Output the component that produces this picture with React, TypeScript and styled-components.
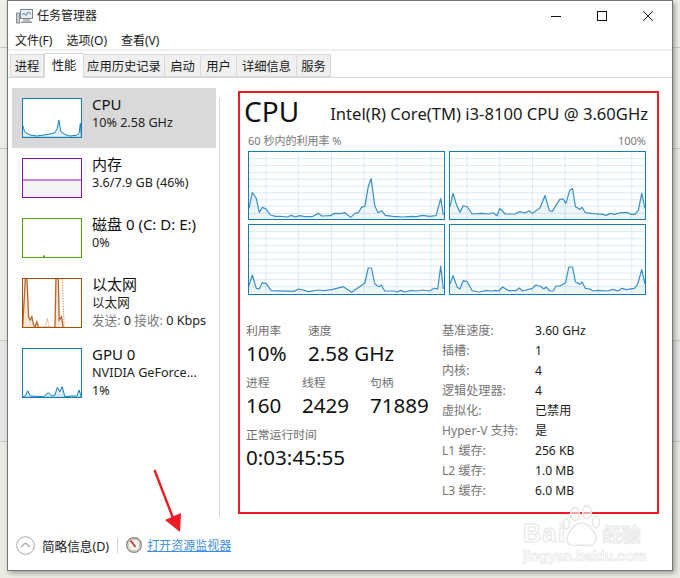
import React from "react";
import styled, { createGlobalStyle } from "styled-components";

const Global = createGlobalStyle`
  html, body { margin: 0; padding: 0; width: 680px; height: 578px; overflow: hidden; background: #e7e7e5; }
  body { font-family: "Noto Sans", "Noto Sans CJK SC", sans-serif; font-size: 12px; color: #1a1a1a; }
  * { box-sizing: border-box; }
`;

const Page = styled.div`
  position: relative;
  width: 680px;
  height: 578px;
  padding-left: 7px;
  overflow: hidden;
  background: linear-gradient(
    to bottom,
    #f0efe8 0 47px,
    #c9c9c6 47px 48px,
    #eeeee8 48px 148px,
    #c9c9c6 148px 149px,
    #ecece7 149px 340px,
    #c9c9c6 340px 341px,
    #e6e6e4 341px 441px,
    #c9c9c6 441px 442px,
    #ecebe3 442px 578px
  );
`;
const Window = styled.div`
  width: 666px;
  height: 571px;
  background: #fff;
  border: 1px solid #777;
  box-shadow: 2px 2px 5px rgba(0, 0, 0, 0.35);
  display: flex;
  flex-direction: column;
`;
const TitleBar = styled.div`
  height: 29px;
  display: flex;
  align-items: center;
  padding-left: 8px;
  gap: 4px;
  flex: none;
`;
const TitleText = styled.span`
  font-size: 12px;
  color: #222;
  flex: 1;
  padding-bottom: 1px;
`;
const WinButton = styled.div`
  width: 46px;
  height: 29px;
  display: flex;
  align-items: center;
  justify-content: center;
`;
const Controls = styled.div`
  display: flex;
  padding-right: 1px;
`;
const MenuBar = styled.div`
  height: 21px;
  display: flex;
  align-items: center;
  gap: 14px;
  padding-left: 7px;
  border-bottom: 2px solid #f0f0f0;
  flex: none;
`;
const MenuItem = styled.span`
  font-size: 12px;
  color: #1a1a1a;
`;
const Tabs = styled.div`
  height: 27px;
  display: flex;
  align-items: flex-end;
  padding-left: 2px;
  border-bottom: 1px solid #d9d9d9;
  flex: none;
`;
const Tab = styled.div<{ $active?: boolean; $first?: boolean; $w: number }>`
  width: ${(p) => p.$w}px;
  height: ${(p) => (p.$active ? 25 : 23)}px;
  margin-bottom: ${(p) => (p.$active ? -1 : 0)}px;
  background: ${(p) => (p.$active ? "#fff" : "#f0f0f0")};
  border: 1px solid #d9d9d9;
  border-bottom: ${(p) => (p.$active ? "none" : "1px solid #d9d9d9")};
  border-left: ${(p) => (p.$first || p.$active ? "1px solid #d9d9d9" : "none")};
  display: flex;
  align-items: center;
  justify-content: center;
  font-size: 12.3px;
  color: #1a1a1a;
  padding-bottom: ${(p) => (p.$active ? 2 : 0)}px;
  position: relative;
`;
const Body = styled.div`
  flex: 1;
  display: flex;
  min-height: 0;
  padding-top: 10px;
`;
const Sidebar = styled.div`
  width: 211px;
  padding-left: 4px;
  flex: none;
`;
const SideItem = styled.div<{ $h: number; $selected?: boolean }>`
  width: 204px;
  height: ${(p) => p.$h}px;
  background: ${(p) => (p.$selected ? "#d9d9d9" : "transparent")};
  display: flex;
  gap: 10px;
  padding: 10px 0 0 10px;
`;
const Thumb = styled.div<{ $color: string; $h?: number }>`
  width: 60px;
  height: ${(p) => p.$h ?? 40}px;
  border: 1px solid ${(p) => p.$color};
  background: #fff;
  flex: none;
  overflow: hidden;
  svg { display: block; width: 100%; height: 100%; }
`;
const SideText = styled.div`
  display: flex;
  flex-direction: column;
  min-width: 0;
  margin-top: -3px;
`;
const SideName = styled.div`
  font-size: 15px;
  line-height: 19px;
  color: #111;
  white-space: nowrap;
`;
const SideSub = styled.div`
  font-size: 12.6px;
  line-height: 18px;
  color: #222;
  white-space: nowrap;
`;
const Muted = styled.span`
  color: #7a7a7a;
`;
const Divider = styled.div`
  width: 1px;
  height: 419px;
  margin-top: 10px;
  background: #d6d6d6;
  flex: none;
`;
const Panel = styled.div`
  width: 421px;
  height: 423px;
  margin: 3px 0 0 18px;
  border: 2px solid #ed1c24;
  padding: 0 11px 0 4px;
  flex: none;
`;
const Head = styled.div`
  height: 36px;
  display: flex;
  justify-content: space-between;
  align-items: flex-end;
`;
const BigTitle = styled.div`
  font-size: 28px;
  line-height: 36px;
  color: #111;
`;
const Model = styled.div`
  font-size: 16.6px;
  line-height: 30px;
  color: #1a1a1a;
  white-space: nowrap;
  margin-right: -2px;
`;
const Caption = styled.div`
  display: flex;
  justify-content: space-between;
  margin: 3px 0 2px 4px;
  height: 17px;
  line-height: 17px;
  font-size: 11px;
  color: #777;
`;
const ChartGrid = styled.div`
  display: grid;
  grid-template-columns: 197px 197px;
  grid-template-rows: 69px 71px;
  gap: 4px;
  margin-left: 4px;
`;
const Chart = styled.div`
  border: 1px solid #117dbb;
  overflow: hidden;
  svg { display: block; width: 100%; height: 100%; }
`;
const Stats = styled.div`
  display: flex;
  margin-top: 26px;
  margin-left: 2px;
`;
const LeftStats = styled.div`
  width: 196px;
  flex: none;
`;
const StatRow = styled.div`
  display: flex;
  height: 52px;
`;
const Stat = styled.div<{ $w: number }>`
  width: ${(p) => p.$w}px;
  flex: none;
`;
const StatLabel = styled.div`
  font-size: 11.8px;
  line-height: 18px;
  color: #6f6f6f;
  white-space: nowrap;
`;
const StatValue = styled.div`
  font-size: 20.6px;
  line-height: 28px;
  color: #111;
  white-space: nowrap;
`;
const Specs = styled.div`
  display: grid;
  grid-template-columns: 93px 1fr;
  grid-auto-rows: 20px;
  align-items: center;
  font-size: 12.1px;
  margin-top: -1px;
`;
const SpecKey = styled.div`
  color: #767676;
  white-space: nowrap;
`;
const SpecVal = styled.div`
  color: #1a1a1a;
  white-space: nowrap;
`;
const Footer = styled.div`
  height: 52px;
  flex: none;
  display: flex;
  align-items: center;
  padding: 2px 0 0 8px;
`;
const Less = styled.div`
  display: flex;
  align-items: center;
  gap: 7px;
  font-size: 12.6px;
  color: #1a1a1a;
`;
const FootSep = styled.div`
  width: 1px;
  height: 15px;
  background: #cfcfcf;
  margin: 0 8px;
`;
const LinkText = styled.a`
  font-size: 12px;
  color: #3b8fe6;
  text-decoration: underline;
  margin-left: 5px;
`;
const ArrowLayer = styled.svg`
  position: absolute;
  left: 150px;
  top: 465px;
  width: 36px;
  height: 72px;
`;
const Watermark = styled.div`
  position: absolute;
  left: 521px;
  top: 503px;
  width: 130px;
  height: 64px;
  pointer-events: none;
  font-family: "Liberation Sans", "Noto Sans CJK SC", sans-serif;
`;
const WmTop = styled.div`
  position: absolute;
  left: 2px;
  top: 16px;
  width: 128px;
  font-weight: 700;
  font-size: 25px;
  line-height: 29px;
  letter-spacing: 1.5px;
  white-space: nowrap;
  color: rgba(255, 255, 255, 0.9);
  -webkit-text-stroke: 1px #e6e6e6;
`;
const WmZh = styled.span`
  margin-left: 36px;
  font-size: 19px;
  letter-spacing: 0;
`;
const WmUrl = styled.div`
  position: absolute;
  left: 2px;
  top: 45px;
  font-size: 14px;
  line-height: 16px;
  font-weight: 700;
  color: rgba(255, 255, 255, 0.9);
  -webkit-text-stroke: 0.7px #e6e6e6;
  white-space: nowrap;
`;
const Paw = styled.svg`
  position: absolute;
  left: 42px;
  top: 2px;
  width: 40px;
  height: 44px;
`;

const g1 = "25,190 35,142 47,160 56,202 65,187 77,192 90,210 105,214 120,214 140,216 153,211 165,216 177,212 195,215 215,215 235,205 245,213 270,212 283,205 300,206 315,203 332,217 345,205 355,203 365,187 375,183 385,125 394,100 405,183 415,203 425,197 437,211 460,214 490,216 515,214 530,215 550,211 570,214 590,212 604,160 612,210";
const g2 = "13,185 22,145 33,180 43,202 53,182 65,185 80,207 110,205 130,207 143,203 155,212 163,190 180,207 210,207 222,200 240,204 252,197 262,205 285,188 300,151 313,197 322,199 345,162 355,162 363,175 375,135 383,130 392,185 405,193 412,187 422,203 445,206 475,208 485,211 497,205 510,208 530,203 550,203 560,208 572,208 582,195 592,145 602,190";
const g3 = "25,420 35,388 47,428 56,430 65,411 77,414 92,435 160,437 175,430 205,438 235,433 250,435 275,432 310,423 335,440 375,412 385,367 395,367 405,415 417,423 425,418 435,436 465,436 472,439 483,434 495,439 515,434 530,436 550,433 570,436 585,428 595,430 604,362 612,430";
const g4 = "13,415 22,390 35,425 43,430 53,405 65,408 80,435 100,439 125,434 135,436 150,434 160,436 172,424 190,435 212,435 222,427 232,436 262,428 272,418 285,421 297,430 303,424 315,436 325,436 333,421 345,421 362,411 372,364 383,364 392,408 405,416 412,409 422,428 435,430 445,436 460,434 490,436 505,431 520,436 532,428 545,432 570,428 580,415 592,372 602,415";

function Graph({ points, x0, y0 }: { points: string; x0: number; y0: number }) {
  const w = 589;
  const h = y0 > 100 ? 207 : 202;
  const vs = [51, 150, 249, 348, 447, 549];
  const hs = [20, 41, 62, 82, 103, 123, 144, 164, 185];
  return (
    <svg viewBox={`${x0} ${y0} ${w} ${h}`} preserveAspectRatio="none">
      {hs.map((v) => (
        <line key={v} x1={x0} x2={x0 + w} y1={y0 + v} y2={y0 + v} stroke="#d9eaf4" strokeWidth="3" />
      ))}
      {vs.map((v) => (
        <line key={v} x1={x0 + v} x2={x0 + v} y1={y0} y2={y0 + h} stroke="#d9eaf4" strokeWidth="3" />
      ))}
      <polygon points={`${x0},${y0 + h} ${points} ${x0 + w},${y0 + h}`} fill="#117dbb" fillOpacity="0.07" />
      <polyline points={points} fill="none" stroke="#3a8fc4" strokeWidth="3.6" strokeLinejoin="round" />
    </svg>
  );
}

function Spark({ box, points, color, fill }: { box: string; points: string; color: string; fill: string }) {
  return (
    <svg viewBox={box} preserveAspectRatio="none">
      <polygon points={points} fill={fill} />
      <polyline points={points} fill="none" stroke={color} strokeWidth="3" />
    </svg>
  );
}

const specs: [string, string][] = [
  ["基准速度:", "3.60 GHz"],
  ["插槽:", "1"],
  ["内核:", "4"],
  ["逻辑处理器:", "4"],
  ["虚拟化:", "已禁用"],
  ["Hyper-V 支持:", "是"],
  ["L1 缓存:", "256 KB"],
  ["L2 缓存:", "1.0 MB"],
  ["L3 缓存:", "6.0 MB"],
];

const tabs: [string, number][] = [
  ["进程", 34],
  ["性能", 40],
  ["应用历史记录", 81],
  ["启动", 36],
  ["用户", 36],
  ["详细信息", 60],
  ["服务", 34],
];

const ethLine = "67,172 75,25 80,25 85,140 90,150 95,140 100,165 105,170 110,155 115,172 165,172 168,25 175,25 178,150 185,140 190,172";

export default function App() {
  return (
    <Page>
      <Global />
      <Window>
        <TitleBar>
          <svg width="17" height="16" viewBox="0 0 17 16">
            <rect x="4.5" y="1.5" width="12" height="9" fill="#e8eef2" stroke="#7d8890" />
            <polyline points="6,7 8,5 10,7.5 12,4 15,6" fill="none" stroke="#4c86ad" />
            <rect x="0.5" y="5" width="3" height="10" fill="#c9cdd0" stroke="#8a8f93" />
            <rect x="7" y="11" width="7" height="2.5" fill="#b7bcc0" />
            <rect x="5" y="13.5" width="11" height="1.5" fill="#8f9599" />
          </svg>
          <TitleText>任务管理器</TitleText>
          <Controls>
            <WinButton>
              <svg width="10" height="10" viewBox="0 0 10 10">
                <line x1="0" x2="10" y1="5.5" y2="5.5" stroke="#111" />
              </svg>
            </WinButton>
            <WinButton>
              <svg width="10" height="10" viewBox="0 0 10 10">
                <rect x="0.5" y="0.5" width="9" height="9" fill="none" stroke="#111" />
              </svg>
            </WinButton>
            <WinButton>
              <svg width="10" height="10" viewBox="0 0 10 10">
                <path d="M0 0 L10 10 M10 0 L0 10" stroke="#222" fill="none" />
              </svg>
            </WinButton>
          </Controls>
        </TitleBar>
        <MenuBar>
          <MenuItem>文件(F)</MenuItem>
          <MenuItem>选项(O)</MenuItem>
          <MenuItem>查看(V)</MenuItem>
        </MenuBar>
        <Tabs>
          {tabs.map(([t, w], i) => (
            <Tab key={t} $w={w} $active={i === 1} $first={i === 0}>
              {t}
            </Tab>
          ))}
        </Tabs>
        <Body>
          <Sidebar>
            <SideItem $h={60} $selected>
              <Thumb $color="#117dbb">
                <Spark box="68 296 176 115" color="#117dbb" fill="#e3eff7" points="67,375 73,395 80,400 90,405 110,408 130,405 150,402 165,398 172,385 177,360 183,395 195,403 210,408 230,406 238,400 242,370 245,410 245,412 67,412" />
              </Thumb>
              <SideText>
                <SideName>CPU</SideName>
                <SideSub>10% 2.58 GHz</SideSub>
              </SideText>
            </SideItem>
            <SideItem $h={60}>
              <Thumb $color="#8b12ae">
                <svg viewBox="0 0 58 38" preserveAspectRatio="none">
                  <rect x="0" y="21" width="58" height="17" fill="#f4f2f4" />
                  <line x1="0" x2="58" y1="21" y2="21" stroke="#8b12ae" />
                </svg>
              </Thumb>
              <SideText>
                <SideName>内存</SideName>
                <SideSub>3.6/7.9 GB (46%)</SideSub>
              </SideText>
            </SideItem>
            <SideItem $h={60}>
              <Thumb $color="#4da60c">
                <svg viewBox="0 0 58 38" preserveAspectRatio="none">
                  <rect x="20" y="36.5" width="2" height="1.5" fill="#4da60c" />
                </svg>
              </Thumb>
              <SideText>
                <SideName>磁盘 0 (C: D: E:)</SideName>
                <SideSub>0%</SideSub>
              </SideText>
            </SideItem>
            <SideItem $h={70}>
              <Thumb $color="#a74f01" $h={50}>
                <svg viewBox="68 26 176 145" preserveAspectRatio="none">
                  <polygon points={ethLine} fill="#f8e6d6" />
                  <polyline points={ethLine} fill="none" stroke="#b5672a" strokeWidth="4" />
                  <polyline points="135,172 142,145 148,172" fill="none" stroke="#d9845a" strokeWidth="3" strokeDasharray="4 4" />
                  <polyline points="181,25 187,25 193,172" fill="none" stroke="#d9845a" strokeWidth="3" strokeDasharray="4 4" />
                </svg>
              </Thumb>
              <SideText>
                <SideName>以太网</SideName>
                <SideSub>以太网</SideSub>
                <SideSub>
                  <Muted>发送:</Muted> 0 <Muted>接收:</Muted> 0 Kbps
                </SideSub>
              </SideText>
            </SideItem>
            <SideItem $h={70}>
              <Thumb $color="#117dbb" $h={50}>
                <Spark box="68 236 176 145" color="#117dbb" fill="#d9e9f4" points="67,380 75,378 82,362 90,378 130,380 145,368 155,378 165,375 172,352 180,365 187,350 195,380 215,378 232,378 238,360 245,380 245,382 67,382" />
              </Thumb>
              <SideText>
                <SideName>GPU 0</SideName>
                <SideSub>NVIDIA GeForce...</SideSub>
                <SideSub>1%</SideSub>
              </SideText>
            </SideItem>
          </Sidebar>
          <Divider />
          <Panel>
            <Head>
              <BigTitle>CPU</BigTitle>
              <Model>Intel(R) Core(TM) i3-8100 CPU @ 3.60GHz</Model>
            </Head>
            <Caption>
              <span>60 秒内的利用率 %</span>
              <span>100%</span>
            </Caption>
            <ChartGrid>
              <Chart><Graph points={g1} x0={25} y0={20} /></Chart>
              <Chart><Graph points={g2} x0={13} y0={20} /></Chart>
              <Chart><Graph points={g3} x0={25} y0={238} /></Chart>
              <Chart><Graph points={g4} x0={13} y0={238} /></Chart>
            </ChartGrid>
            <Stats>
              <LeftStats>
                <StatRow>
                  <Stat $w={62}>
                    <StatLabel>利用率</StatLabel>
                    <StatValue>10%</StatValue>
                  </Stat>
                  <Stat $w={120}>
                    <StatLabel>速度</StatLabel>
                    <StatValue>2.58 GHz</StatValue>
                  </Stat>
                </StatRow>
                <StatRow>
                  <Stat $w={56}>
                    <StatLabel>进程</StatLabel>
                    <StatValue>160</StatValue>
                  </Stat>
                  <Stat $w={68}>
                    <StatLabel>线程</StatLabel>
                    <StatValue>2429</StatValue>
                  </Stat>
                  <Stat $w={70}>
                    <StatLabel>句柄</StatLabel>
                    <StatValue>71889</StatValue>
                  </Stat>
                </StatRow>
                <Stat $w={150}>
                  <StatLabel>正常运行时间</StatLabel>
                  <StatValue>0:03:45:55</StatValue>
                </Stat>
              </LeftStats>
              <Specs>
                {specs.map(([k, v]) => (
                  <React.Fragment key={k}>
                    <SpecKey>{k}</SpecKey>
                    <SpecVal>{v}</SpecVal>
                  </React.Fragment>
                ))}
              </Specs>
            </Stats>
          </Panel>
        </Body>
        <Footer>
          <Less>
            <svg width="19" height="19" viewBox="0 0 19 19">
              <circle cx="9.5" cy="9.5" r="8.8" fill="#fff" stroke="#a9a9a9" />
              <polyline points="5,11 9.5,7 14,11" fill="none" stroke="#a9a9a9" strokeWidth="1.2" />
            </svg>
            简略信息(D)
          </Less>
          <FootSep />
          <svg width="16" height="16" viewBox="0 0 16 16">
            <circle cx="8" cy="8" r="7.3" fill="#f4f2ee" stroke="#8f8b83" strokeWidth="1.4" />
            <circle cx="8" cy="8" r="5.6" fill="#f7f5f1" stroke="#c9c5bc" />
            <line x1="4.5" y1="3.5" x2="9.5" y2="10" stroke="#c0322a" strokeWidth="1.7" />
          </svg>
          <LinkText>打开资源监视器</LinkText>
        </Footer>
      </Window>
      <ArrowLayer viewBox="150 465 36 72">
        <line x1="154.5" y1="470" x2="173" y2="518" stroke="#ed1c24" strokeWidth="2.4" />
        <polygon points="180,532 165,520 181,513" fill="#ed1c24" />
      </ArrowLayer>
      <Watermark>
        <Paw viewBox="0 0 40 44">
          <g fill="rgba(255,255,255,0.6)" stroke="#e6e6e6" strokeWidth="1.4">
            <ellipse cx="12" cy="9" rx="4.5" ry="6.5" />
            <ellipse cx="24" cy="7" rx="4.5" ry="6.5" />
            <ellipse cx="3.5" cy="19" rx="3" ry="5" />
            <ellipse cx="33" cy="17" rx="3.5" ry="6" />
            <path d="M18 18 C10 18 4 30 4 35 C4 41 11 41 18 40 C25 41 33 41 33 34 C33 28 26 18 18 18 Z" />
          </g>
        </Paw>
        <WmTop>
          Bai
          <WmZh>经验</WmZh>
        </WmTop>
        <WmUrl>jingyan.baidu.com</WmUrl>
      </Watermark>
    </Page>
  );
}
